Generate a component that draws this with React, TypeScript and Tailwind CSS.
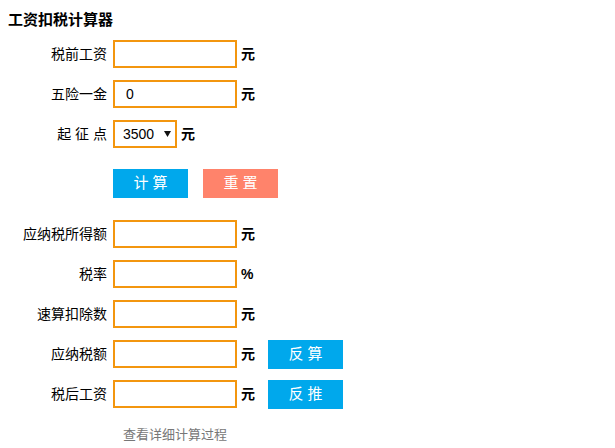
import React from 'react'

const font = { fontFamily: '"Liberation Sans", "Noto Sans CJK SC", sans-serif' }

function Row({
  label,
  unit,
  value,
  action,
}: {
  label: string
  unit: string
  value?: string
  action?: string
}) {
  return (
    <div className="flex items-center h-[28px]">
      <span className="w-[99px] text-right text-[14px] text-black">{label}</span>
      <input
        readOnly
        value={value ?? ''}
        className="ml-[6px] w-[124px] h-[28px] border-2 border-[#f3960f] px-[11px] text-[14px] text-black outline-none"
      />
      <span className="ml-[4px] w-[27px] text-[14px] font-bold text-black">{unit}</span>
      {action && (
        <button className="w-[75px] h-[29px] bg-[#00a8ec] text-white text-[15px]">
          {action}
        </button>
      )}
    </div>
  )
}

export default function App() {
  return (
    <div className="w-[615px] h-[448px] bg-white pl-[8px] pt-[10px]" style={font}>
      <h1 className="h-5 leading-5 text-[15px] font-bold text-black">工资扣税计算器</h1>
      <div className="mt-[10px] flex flex-col gap-[12px]">
        <Row label="税前工资" unit="元" />
        <Row label="五险一金" unit="元" value="0" />
        <div className="flex items-center h-[28px]">
          <span className="w-[99px] text-right text-[14px] text-black">起 征 点</span>
          <div className="ml-[6px] w-[64px] h-[28px] border-2 border-[#f3960f] flex items-center pl-[8px] text-[14px] text-black">
            <span>3500</span>
            <svg width="7" height="6" viewBox="0 0 7 6" className="ml-[10px]">
              <path d="M0 0H7L3.5 6Z" fill="#111" />
            </svg>
          </div>
          <span className="ml-[4px] text-[14px] font-bold text-black">元</span>
        </div>
      </div>
      <div className="mt-[21px] ml-[105px] flex gap-[15px]">
        <button className="w-[75px] h-[29px] bg-[#00a8ec] text-white text-[15px]">计 算</button>
        <button className="w-[75px] h-[29px] bg-[#ff836b] text-white text-[15px]">重 置</button>
      </div>
      <div className="mt-[22px] flex flex-col gap-[12px]">
        <Row label="应纳税所得额" unit="元" />
        <Row label="税率" unit="%" />
        <Row label="速算扣除数" unit="元" />
        <Row label="应纳税额" unit="元" action="反 算" />
        <Row label="税后工资" unit="元" action="反 推" />
      </div>
      <p className="mt-[17px] ml-[115px] h-5 leading-5 text-[13px] text-[#777]">查看详细计算过程</p>
    </div>
  )
}
